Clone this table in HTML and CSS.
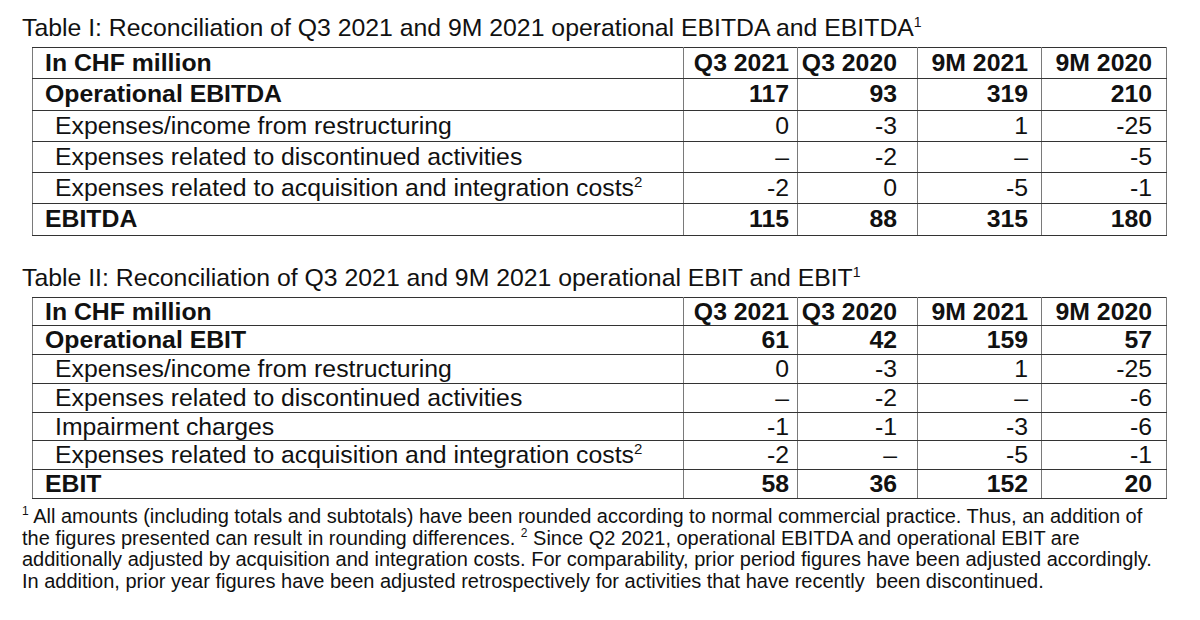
FILE: index.html
```html
<!DOCTYPE html>
<html lang="en">
<head>
<meta charset="utf-8">
<title>Reconciliation of operational EBITDA and EBIT</title>
<link rel="stylesheet" href="styles.css">
</head>
<body>
<div class="page">
  <h1 class="title">Table I: Reconciliation of Q3 2021 and 9M 2021 operational EBITDA and EBITDA<sup class="sup-title">1</sup></h1>
  <table class="recon recon-1">
    <colgroup><col class="c0"><col class="c1"><col class="c2"><col class="c3"><col class="c4"></colgroup>
    <tr class="bold"><td class="label">In CHF million</td><td>Q3 2021</td><td>Q3 2020</td><td>9M 2021</td><td>9M 2020</td></tr>
    <tr class="bold"><td class="label">Operational EBITDA</td><td>117</td><td>93</td><td>319</td><td>210</td></tr>
    <tr><td class="label indent">Expenses/income from restructuring</td><td>0</td><td>-3</td><td>1</td><td>-25</td></tr>
    <tr><td class="label indent">Expenses related to discontinued activities</td><td>–</td><td>-2</td><td>–</td><td>-5</td></tr>
    <tr><td class="label indent">Expenses related to acquisition and integration costs<sup class="sup-cell">2</sup></td><td>-2</td><td>0</td><td>-5</td><td>-1</td></tr>
    <tr class="bold"><td class="label">EBITDA</td><td>115</td><td>88</td><td>315</td><td>180</td></tr>
  </table>

  <h1 class="title title-2">Table II: Reconciliation of Q3 2021 and 9M 2021 operational EBIT and EBIT<sup class="sup-title">1</sup></h1>
  <table class="recon recon-2">
    <colgroup><col class="c0"><col class="c1"><col class="c2"><col class="c3"><col class="c4"></colgroup>
    <tr class="bold"><td class="label">In CHF million</td><td>Q3 2021</td><td>Q3 2020</td><td>9M 2021</td><td>9M 2020</td></tr>
    <tr class="bold"><td class="label">Operational EBIT</td><td>61</td><td>42</td><td>159</td><td>57</td></tr>
    <tr><td class="label indent">Expenses/income from restructuring</td><td>0</td><td>-3</td><td>1</td><td>-25</td></tr>
    <tr><td class="label indent">Expenses related to discontinued activities</td><td>–</td><td>-2</td><td>–</td><td>-6</td></tr>
    <tr><td class="label indent">Impairment charges</td><td>-1</td><td>-1</td><td>-3</td><td>-6</td></tr>
    <tr><td class="label indent">Expenses related to acquisition and integration costs<sup class="sup-cell">2</sup></td><td>-2</td><td>–</td><td>-5</td><td>-1</td></tr>
    <tr class="bold"><td class="label">EBIT</td><td>58</td><td>36</td><td>152</td><td>20</td></tr>
  </table>

  <p class="notes"><sup class="sup-note">1</sup> All amounts (including totals and subtotals) have been rounded according to normal commercial practice. Thus, an addition of<br>the figures presented can result in rounding differences. <sup class="sup-note">2</sup> Since Q2 2021, operational EBITDA and operational EBIT are<br>additionally adjusted by acquisition and integration costs. For comparability, prior period figures have been adjusted accordingly.<br>In addition, prior year figures have been adjusted retrospectively for activities that have recently&nbsp; been discontinued.</p>
</div>
</body>
</html>
```

FILE: styles.css
```css
html, body {
  margin: 0;
  padding: 0;
  background: #ffffff;
}

body {
  color: #111111;
  font-family: "Liberation Sans", Arial, sans-serif;
}

.page {
  padding: 14px 0 0 22px;
}

.title {
  margin: 0 0 5px 0;
  font-size: 24.8px;
  font-weight: normal;
  line-height: 28px;
  white-space: nowrap;
}

.title-2 {
  margin-top: 28px;
}

.sup-title {
  font-size: 14px;
  line-height: 0;
  vertical-align: 9px;
}

.recon {
  margin-left: 10px;
  width: 1134px;
  border-collapse: collapse;
  table-layout: fixed;
  font-size: 24.8px;
}

.c0 { width: 651px; }
.c1 { width: 114px; }
.c2 { width: 120px; }
.c3 { width: 124px; }
.c4 { width: 125px; }

.recon td {
  padding: 0;
  border-top: 1px solid #333333;
  border-bottom: 1px solid #333333;
  border-left: 1px solid #7a7a7a;
  border-right: 1px solid #7a7a7a;
  text-align: right;
  white-space: nowrap;
}

.recon-1 td {
  line-height: 30.3px;
}

.recon-2 td {
  line-height: 27.7px;
}

.recon td:nth-child(2) { padding-right: 8px; }
.recon td:nth-child(3) { padding-right: 20px; }
.recon td:nth-child(4) { padding-right: 13px; }
.recon td:nth-child(5) { padding-right: 14px; }

.recon td.label {
  padding-left: 12px;
  text-align: left;
}

.recon td.indent {
  padding-left: 22px;
}

.bold td {
  font-weight: bold;
}

.sup-cell {
  font-size: 15px;
  line-height: 0;
  vertical-align: 9px;
}

.notes {
  margin: 7px 0 0 0;
  font-size: 20px;
  line-height: 21.8px;
  white-space: nowrap;
}

.sup-note {
  font-size: 12px;
  line-height: 0;
  vertical-align: 8px;
}
```
